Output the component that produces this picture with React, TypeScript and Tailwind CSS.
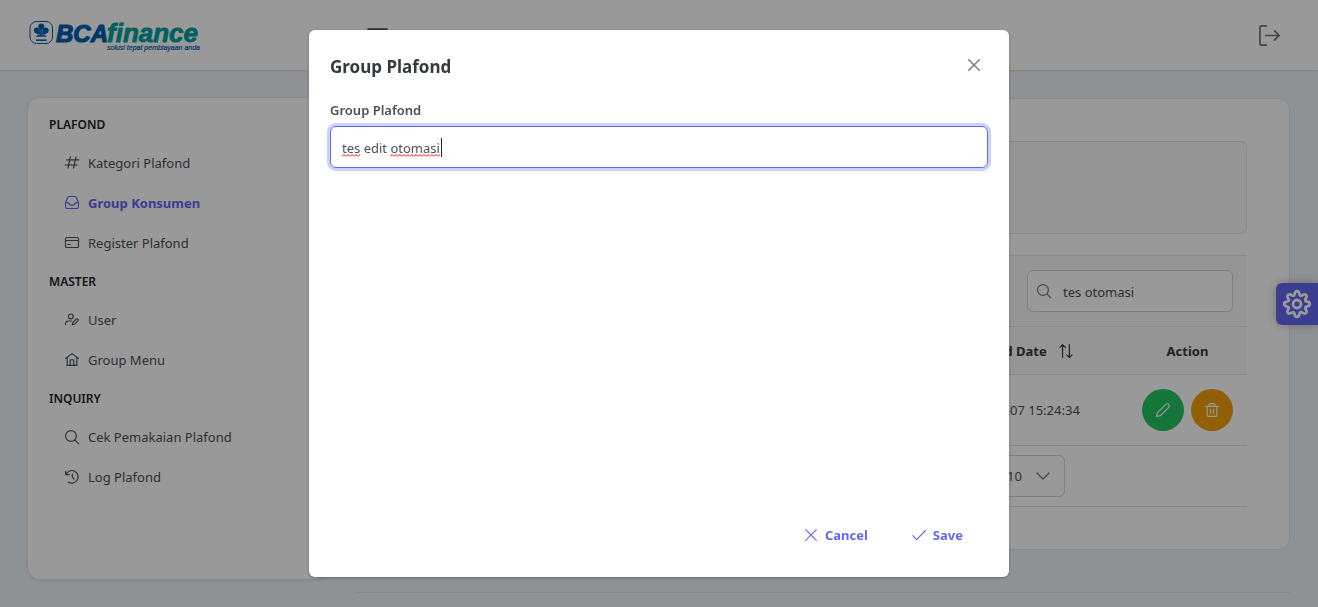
import React, { useState } from "react";

type IconName =
  | "hash"
  | "inbox"
  | "card"
  | "user-edit"
  | "home"
  | "search"
  | "history"
  | "times"
  | "check"
  | "pencil"
  | "trash"
  | "chevron-down"
  | "sort"
  | "sign-out"
  | "cog"
  | "bars";

const shapes: Record<IconName, React.ReactNode> = {
  hash: <path d="M5.4.8 3 12.200M11 .8 8.600 12.200M1.800 3.900h12M.2 9h12" />,
  inbox: (
    <path d="M.5 6.800 2.600 1.700C2.900.8 3.400.5 4.200.5h5.600c.8 0 1.300.3 1.600 1.200l2.100 5.100v4.200c0 .9-.6 1.500-1.500 1.500H2c-.9 0-1.500-.6-1.500-1.500ZM.5 6.800h3.100l1.500 2.100h3.800l1.500-2.100h3.100" />
  ),
  card: (
    <>
      <rect x=".5" y="1.500" width="13" height="10" rx="1.300" />
      <path d="M.5 4.500h13M2.800 8.500h2.400" />
    </>
  ),
  "user-edit": (
    <>
      <circle cx="5.800" cy="3.400" r="2.400" />
      <path d="M.5 11.600v-.6c0-1.900 1.300-3 3-3h3M12.900 6.200c-.5-.5-1.200-.5-1.700 0L7.900 9.500l-.5 2.200 2.200-.5 3.300-3.300c.5-.5.5-1.200 0-1.700Z" />
    </>
  ),
  home: <path d="M.5 5.500 7 .6l6.500 4.900M2.200 4.400V12.400h9.600V4.400M5.200 12.400V7.500c0-.5.3-.8.8-.8h2c.5 0 .8.3.8.8v4.900" />,
  search: (
    <>
      <circle cx="6" cy="6" r="5.400" />
      <path d="m10 10 3.600 3.600" />
    </>
  ),
  history: <path d="M.7 1v3.600h3.600M1 4.400A6.300 6.300 0 1 1 3.200 12M7.300 3.800v3.500l1.900 1.900" />,
  times: <path d="m1.700 1.700 10.600 10.600M12.300 1.700 1.700 12.300" />,
  check: <path d="m.7 7.600 4 4L13.400 2.500" />,
  pencil: <path d="M12.700 1.400c-.8-.9-2.100-.9-3 0L1.300 9.800.6 13.400l3.700-.7 8.400-8.300c.8-.9.8-2.100 0-3Z" />,
  trash: (
    <path d="M.6 3.400h12.800M2.200 3.400v8.900c0 .7.4 1.100 1.100 1.100h7.400c.7 0 1.100-.4 1.100-1.100V3.400M4.200 3.200V1.600c0-.6.4-1 1-1h3.600c.6 0 1 .4 1 1v1.600M5.500 6.400v4M8.500 6.400v4" />
  ),
  "chevron-down": <path d="m1 4 6 6 6-6" />,
  sort: <path d="M3.600 13.500V.6M.9 3.300 3.600.6l2.700 2.700M10.400.6v12.900M7.700 10.800l2.700 2.700 2.700-2.700" />,
  "sign-out": (
    <path d="M4.800.6H1.900C1.100.6.6 1.100.6 1.900v10.200c0 .8.5 1.300 1.300 1.300h2.900M4.400 7h9M10.400 3.900 13.500 7l-3.100 3.100" />
  ),
  cog: (
    <>
      <circle cx="7" cy="7" r="2" />
      <path d="M5.720 2.300C5.900 1.200 6.200.6 7 .6s1.100.6 1.280 1.700c.12.560.6.760 1.130.46.930-.660 1.560-.850 2.120-.290s.37 1.190-.290 2.120c-.3.530-.1 1.010.460 1.130 1.100.180 1.700.480 1.700 1.280s-.6 1.100-1.700 1.280c-.560.120-.760.6-.460 1.130.660.930.850 1.560.290 2.120s-1.190.370-2.120-.290c-.530-.3-1.010-.1-1.130.460C8.100 12.800 7.800 13.400 7 13.400s-1.100-.6-1.280-1.700c-.12-.560-.6-.760-1.130-.460-.930.660-1.560.850-2.120.290s-.370-1.190.290-2.120c.3-.530.1-1.010-.460-1.130C1.200 8.100.6 7.800.6 7s.6-1.100 1.700-1.280c.560-.12.760-.6.460-1.130-.660-.930-.850-1.560-.290-2.120s1.190-.370 2.120.290c.530.3 1.010.1 1.130-.460Z" />
    </>
  ),
  bars: <path d="M.6 2.700h12.800M.6 7h12.800M.6 11.300h12.800" />,
};

function Icon({ name, className = "size-3.5", weight = 1.15 }: { name: IconName; className?: string; weight?: number }) {
  return (
    <svg
      viewBox="0 0 14 14"
      className={`shrink-0 overflow-visible ${className}`}
      fill="none"
      stroke="currentColor"
      strokeWidth={weight}
      strokeLinecap="round"
      strokeLinejoin="round"
      aria-hidden="true"
    >
      {shapes[name]}
    </svg>
  );
}

function Logo() {
  return (
    <svg viewBox="0 0 172 36" className="h-9 w-[172px]" role="img" aria-label="BCA finance">
      <rect x="2" y="4.500" width="22.500" height="22" rx="6.500" fill="#fff" stroke="#0060af" strokeWidth="1" />
      <g fill="#0060af">
        <circle cx="13.300" cy="9.600" r="3" />
        <circle cx="8.900" cy="13.400" r="3" />
        <circle cx="17.700" cy="13.400" r="3" />
        <circle cx="10.600" cy="16" r="1.800" />
        <circle cx="16" cy="16" r="1.800" />
        <path d="M12.200 10h2.200v9h-2.200ZM7.500 19.700c2-1.800 3.600-2 5.800-1 2.200-1 3.800-.8 5.800 1Z" />
        <path d="M8 22.400h10.600v1.600H8Z" />
      </g>
      <g className="font-['Liberation_Sans',sans-serif] font-bold italic" strokeLinejoin="round">
        <text x="28" y="25" fontSize="24" fill="#0060af" stroke="#0060af" strokeWidth="1.200">
          BCA
        </text>
        <text x="79" y="25" fontSize="26" fill="#00a19c" stroke="#00a19c" strokeWidth=".8">
          finance
        </text>
      </g>
      <text
        x="79"
        y="33"
        fontSize="7"
        fill="#0060af"
        stroke="#0060af"
        strokeWidth=".2"
        className="font-['Liberation_Sans',sans-serif] italic"
      >
        solusi tepat pembiayaan anda
      </text>
    </svg>
  );
}

const menu: { title: string; items: { label: string; icon: IconName; active?: boolean }[] }[] = [
  {
    title: "PLAFOND",
    items: [
      { label: "Kategori Plafond", icon: "hash" },
      { label: "Group Konsumen", icon: "inbox", active: true },
      { label: "Register Plafond", icon: "card" },
    ],
  },
  {
    title: "MASTER",
    items: [
      { label: "User", icon: "user-edit" },
      { label: "Group Menu", icon: "home" },
    ],
  },
  {
    title: "INQUIRY",
    items: [
      { label: "Cek Pemakaian Plafond", icon: "search" },
      { label: "Log Plafond", icon: "history" },
    ],
  },
];

function Topbar() {
  return (
    <header className="flex h-[70px] items-center bg-white px-7 shadow-[0_3px_5px_rgba(0,0,0,0.02),0_0_2px_rgba(0,0,0,0.05),0_1px_4px_rgba(0,0,0,0.08)]">
      <a href="#" className="w-[328px]">
        <Logo />
      </a>
      <button aria-label="Toggle menu" className="flex size-[42px] items-center justify-center">
        <Icon name="bars" className="size-[21px]" />
      </button>
      <button aria-label="Sign out" className="ml-auto flex size-[42px] items-center justify-center text-[#6c757d]">
        <Icon name="sign-out" className="size-[21px]" />
      </button>
    </header>
  );
}

function Sidebar() {
  return (
    <nav className="h-[calc(100vh-126px)] w-[300px] shrink-0 rounded-xl bg-white px-[21px] py-2 shadow-[0_3px_5px_rgba(0,0,0,0.02),0_0_2px_rgba(0,0,0,0.05),0_1px_4px_rgba(0,0,0,0.08)]">
      {menu.map((group) => (
        <section key={group.title}>
          <h2 className="flex h-[37px] items-center text-xs font-semibold text-[#212529]">{group.title}</h2>
          <ul>
            {group.items.map((item) => (
              <li key={item.label}>
                <a
                  href="#"
                  className={`flex h-10 items-center gap-[9px] pl-4 ${item.active ? "font-bold text-[#6366f1]" : ""}`}
                >
                  <Icon name={item.icon} />
                  <span className="pt-0.5">{item.label}</span>
                </a>
              </li>
            ))}
          </ul>
        </section>
      ))}
    </nav>
  );
}

function GroupTable() {
  const [query, setQuery] = useState("tes otomasi");
  return (
    <div>
      <div className="flex justify-end border-y border-[#dfe7ef] bg-[#f8f9fa] p-3.5">
        <label className="relative block">
          <span className="sr-only">Search</span>
          <Icon name="search" className="absolute top-3.5 left-2.5 size-3.5 text-[#6c757d]" />
          <input
            value={query}
            onChange={(e) => setQuery(e.target.value)}
            className="h-[42px] w-[206px] rounded-md border border-[#ced4da] bg-white pt-0.5 pr-2.5 pl-[35px]"
          />
        </label>
      </div>
      <table className="w-full table-fixed border-collapse text-left">
        <colgroup>
          <col />
          <col className="w-[185px]" />
          <col className="w-[119px]" />
        </colgroup>
        <thead>
          <tr className="h-[47px] border-b border-[#dfe7ef] bg-[#f8f9fa] font-bold text-[#343a40]">
            <th className="px-3.5 pt-0.5">Group Plafond</th>
            <th className="px-3.5 pt-0.5">
              <span className="flex items-center gap-3">
                Updated Date
                <Icon name="sort" className="size-3.5" />
              </span>
            </th>
            <th className="px-3.5 pt-0.5 text-center">Action</th>
          </tr>
        </thead>
        <tbody>
          <tr className="h-[71px] border-b border-[#dfe7ef]">
            <td className="px-3.5 pt-0.5">tes otomasi</td>
            <td className="px-3.5 pt-0.5">2023-02-07 15:24:34</td>
            <td className="px-3.5">
              <div className="flex gap-[7px]">
                <button
                  aria-label="Edit"
                  className="flex size-[42px] items-center justify-center rounded-full bg-[#22c55e] text-white"
                >
                  <Icon name="pencil" weight={1.2} />
                </button>
                <button
                  aria-label="Delete"
                  className="flex size-[42px] items-center justify-center rounded-full bg-[#f59e0b] text-white"
                >
                  <Icon name="trash" weight={1.2} />
                </button>
              </div>
            </td>
          </tr>
        </tbody>
      </table>
      <div className="flex h-[61px] items-center justify-center border-b border-[#dfe7ef]">
        <div className="flex w-[484px] items-center justify-between">
          <span>Showing 1 to 1 of 1 entries</span>
          <button className="size-[42px] rounded-full bg-[#eef2ff] text-[#4338ca]">1</button>
          <label className="relative block">
            <span className="sr-only">Rows per page</span>
            <select className="h-[42px] w-[69px] appearance-none rounded-md border border-[#ced4da] bg-white pt-0.5 pl-2.5">
              <option>10</option>
              <option>20</option>
              <option>30</option>
            </select>
            <Icon
              name="chevron-down"
              weight={1.3}
              className="pointer-events-none absolute top-3.5 right-[15px] size-3.5 text-[#6c757d]"
            />
          </label>
        </div>
      </div>
    </div>
  );
}

function Squiggle({ className }: { className: string }) {
  return (
    <svg className={`pointer-events-none absolute h-[3px] ${className}`} aria-hidden="true">
      <defs>
        <pattern id="wave" width="4" height="3" patternUnits="userSpaceOnUse">
          <path d="M0 2.500 2 .5l2 2" fill="none" stroke="#f00" />
        </pattern>
      </defs>
      <rect width="100%" height="3" fill="url(#wave)" />
    </svg>
  );
}

function EditDialog() {
  const [name, setName] = useState("tes edit otomasi");
  return (
    <div className="fixed inset-0 flex items-center justify-center bg-black/40">
      <div
        role="dialog"
        aria-labelledby="dialog-title"
        className="flex h-[90vh] w-[700px] flex-col rounded-md bg-white p-[21px] shadow-[0_1px_3px_rgba(0,0,0,0.3)]"
      >
        <div className="flex h-7 items-center justify-between">
          <h1 id="dialog-title" className="pt-0.5 text-[17px] font-bold text-[#343a40]">
            Group Plafond
          </h1>
          <button aria-label="Close" className="flex size-7 items-center justify-center text-[#6c757d]">
            <Icon name="times" weight={1.3} />
          </button>
        </div>
        <div className="flex grow flex-col gap-1.5 pt-[21px]">
          <label htmlFor="group-name" className="leading-5 font-semibold">
            Group Plafond
          </label>
          <div className="relative">
            <input
              id="group-name"
              value={name}
              spellCheck={false}
              onChange={(e) => setName(e.target.value)}
              className="h-[42px] w-full rounded-md border border-[#6366f1] px-[11px] pt-0.5 shadow-[0_0_0_3px_#c7d2fe] outline-none"
            />
            <Squiggle className="top-7 left-3 w-[18px]" />
            <Squiggle className="top-7 left-[60px] w-[50px]" />
            <span className="absolute top-3 left-[111px] h-[19px] w-px bg-[#212529]" />
          </div>
        </div>
        <div className="flex h-[42px] items-center justify-end gap-[30px] pr-[11px] font-bold text-[#6366f1]">
          <button className="flex h-[42px] items-center gap-[7px] pr-3.5">
            <Icon name="times" />
            <span className="pt-0.5">Cancel</span>
          </button>
          <button className="flex h-[42px] items-center gap-[7px] pr-3.5">
            <Icon name="check" />
            <span className="pt-0.5">Save</span>
          </button>
        </div>
      </div>
    </div>
  );
}

export default function App() {
  return (
    <div className="h-screen overflow-hidden bg-[#eff3f8] font-['Noto_Sans',sans-serif] text-[13px] text-[#495057]">
      <Topbar />
      <div className="flex items-start gap-7 px-7 pt-7">
        <Sidebar />
        <main className="min-w-0 grow">
          <div className="rounded-xl border border-[#dfe7ef] bg-white p-[42px]">
            <div className="mb-[21px] h-[93px] rounded-md border border-[#dee2e6] bg-[#f8f9fa]" />
            <GroupTable />
          </div>
          <footer className="mt-[42px] border-t border-[#dfe7ef] pt-3.5">PLAFOND</footer>
        </main>
      </div>
      <button
        aria-label="Settings"
        className="fixed top-[283px] right-0 flex size-[42px] items-center justify-center rounded-l-md bg-[#6366f1] text-white shadow-[0_0_12px_rgba(0,0,0,0.25)]"
      >
        <Icon name="cog" weight={1.4} className="size-7" />
      </button>
      <EditDialog />
    </div>
  );
}
